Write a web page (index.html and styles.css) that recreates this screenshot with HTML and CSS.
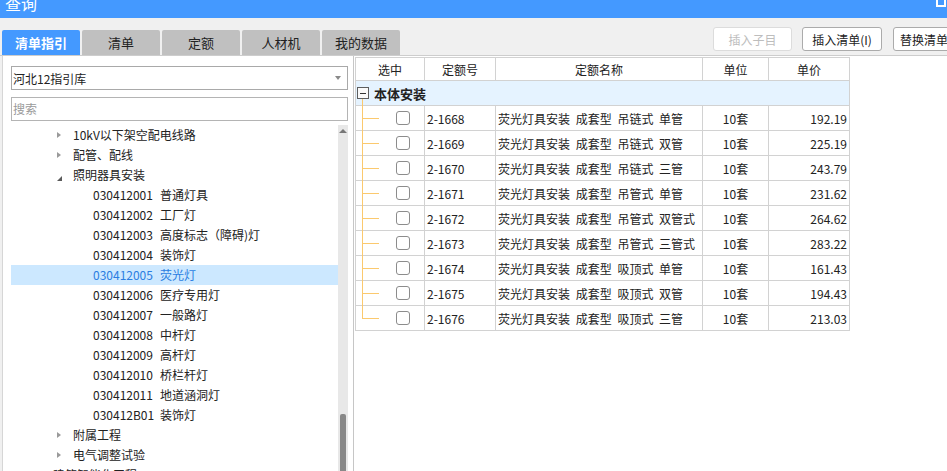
FILE: index.html
```html
<!DOCTYPE html>
<html lang="zh-CN">
<head>
<meta charset="utf-8">
<title>查询</title>
<link rel="stylesheet" href="styles.css">
</head>
<body>
<div class="titlebar">
  <span class="title">查询</span>
  <span class="maxicon"></span>
</div>
<div class="toolbar">
  <div class="tabs">
    <div class="tab active">清单指引</div>
    <div class="tab">清单</div>
    <div class="tab">定额</div>
    <div class="tab">人材机</div>
    <div class="tab">我的数据</div>
  </div>
  <div class="actions">
    <button class="btn btn-disabled">插入子目</button>
    <button class="btn btn-insert">插入清单(I)</button>
    <button class="btn btn-replace">替换清单</button>
  </div>
</div>
<div class="main">
  <div class="left">
    <div class="select"><span>河北12指引库</span><span class="caret"></span></div>
    <div class="search">搜索</div>
    <div class="tree">
      <div class="tree-list">
        <div class="row l1"><span class="arr"></span><span>10kV以下架空配电线路</span></div>
        <div class="row l1"><span class="arr"></span><span>配管、配线</span></div>
        <div class="row l1"><span class="arr open"></span><span>照明器具安装</span></div>
        <div class="row l2"><span class="code">030412001</span><span>普通灯具</span></div>
        <div class="row l2"><span class="code">030412002</span><span>工厂灯</span></div>
        <div class="row l2"><span class="code">030412003</span><span>高度标志（障碍)灯</span></div>
        <div class="row l2"><span class="code">030412004</span><span>装饰灯</span></div>
        <div class="row l2 sel"><span class="code">030412005</span><span>荧光灯</span></div>
        <div class="row l2"><span class="code">030412006</span><span>医疗专用灯</span></div>
        <div class="row l2"><span class="code">030412007</span><span>一般路灯</span></div>
        <div class="row l2"><span class="code">030412008</span><span>中杆灯</span></div>
        <div class="row l2"><span class="code">030412009</span><span>高杆灯</span></div>
        <div class="row l2"><span class="code">030412010</span><span>桥栏杆灯</span></div>
        <div class="row l2"><span class="code">030412011</span><span>地道涵洞灯</span></div>
        <div class="row l2"><span class="code">030412B01</span><span>装饰灯</span></div>
        <div class="row l1"><span class="arr"></span><span>附属工程</span></div>
        <div class="row l1"><span class="arr"></span><span>电气调整试验</span></div>
        <div class="row l0"><span class="arr"></span><span>建筑智能化工程</span></div>
      </div>
      <div class="scrollbar"><span class="up"></span><span class="thumb"></span></div>
    </div>
  </div>
  <div class="right">
    <div class="grid">
      <div class="hd">选中</div>
      <div class="hd">定额号</div>
      <div class="hd">定额名称</div>
      <div class="hd">单位</div>
      <div class="hd">单价</div>

      <div class="group"><span class="minus"></span><span class="group-name">本体安装</span></div>

      <div class="c1"><span class="cb"></span></div>
      <div class="c2">2-1668</div>
      <div class="c3">荧光灯具安装 成套型 吊链式 单管</div>
      <div class="c4">10套</div>
      <div class="c5">192.19</div>

      <div class="c1"><span class="cb"></span></div>
      <div class="c2">2-1669</div>
      <div class="c3">荧光灯具安装 成套型 吊链式 双管</div>
      <div class="c4">10套</div>
      <div class="c5">225.19</div>

      <div class="c1"><span class="cb"></span></div>
      <div class="c2">2-1670</div>
      <div class="c3">荧光灯具安装 成套型 吊链式 三管</div>
      <div class="c4">10套</div>
      <div class="c5">243.79</div>

      <div class="c1"><span class="cb"></span></div>
      <div class="c2">2-1671</div>
      <div class="c3">荧光灯具安装 成套型 吊管式 单管</div>
      <div class="c4">10套</div>
      <div class="c5">231.62</div>

      <div class="c1"><span class="cb"></span></div>
      <div class="c2">2-1672</div>
      <div class="c3">荧光灯具安装 成套型 吊管式 双管式</div>
      <div class="c4">10套</div>
      <div class="c5">264.62</div>

      <div class="c1"><span class="cb"></span></div>
      <div class="c2">2-1673</div>
      <div class="c3">荧光灯具安装 成套型 吊管式 三管式</div>
      <div class="c4">10套</div>
      <div class="c5">283.22</div>

      <div class="c1"><span class="cb"></span></div>
      <div class="c2">2-1674</div>
      <div class="c3">荧光灯具安装 成套型 吸顶式 单管</div>
      <div class="c4">10套</div>
      <div class="c5">161.43</div>

      <div class="c1"><span class="cb"></span></div>
      <div class="c2">2-1675</div>
      <div class="c3">荧光灯具安装 成套型 吸顶式 双管</div>
      <div class="c4">10套</div>
      <div class="c5">194.43</div>

      <div class="c1 last"><span class="cb"></span></div>
      <div class="c2">2-1676</div>
      <div class="c3">荧光灯具安装 成套型 吸顶式 三管</div>
      <div class="c4">10套</div>
      <div class="c5">213.03</div>
    </div>
  </div>
</div>
</body>
</html>
```

FILE: styles.css
```css
* { box-sizing: border-box; }
html, body { margin: 0; padding: 0; overflow: hidden; }
body {
  width: 947px;
  height: 471px;
  background: #f0f0f0;
  font-family: "Noto Sans CJK SC", "Noto Sans", sans-serif;
  font-size: 12px;
  color: #222;
}

/* title bar */
.titlebar {
  height: 18px;
  background: #4499ff;
  display: flex;
  justify-content: space-between;
  align-items: flex-start;
  overflow: hidden;
}
.title {
  color: #fff;
  font-size: 16px;
  line-height: 16px;
  margin: -5px 0 0 5px;
}
.maxicon {
  width: 10px;
  height: 7px;
  border: 2px solid #fff;
  border-top: none;
  margin-right: 1px;
}

/* toolbar with tabs and buttons */
.toolbar {
  height: 37px;
  display: flex;
  overflow: hidden;
}
.tabs {
  display: flex;
  gap: 2px;
  padding-left: 2px;
  align-items: flex-end;
  flex-shrink: 0;
}
.tab {
  width: 78px;
  height: 25px;
  background: #c0c0c0;
  border-radius: 2px 2px 0 0;
  text-align: center;
  line-height: 25px;
  font-size: 13px;
  color: #222;
}
.tab.active {
  background: #4499ff;
  color: #fff;
  font-weight: bold;
}
.actions {
  display: flex;
  flex-shrink: 0;
  margin-left: 313px;
  padding-top: 9px;
  align-items: flex-start;
}
.btn {
  height: 24px;
  width: 80px;
  padding: 0;
  background: #fff;
  border: 1px solid #ababab;
  border-radius: 3px;
  font: inherit;
  color: #222;
  flex-shrink: 0;
}
.btn-disabled {
  width: 79px;
  border-color: #dcdcdc;
  color: #bdbdbd;
}
.btn-insert { margin-left: 10px; }
.btn-replace {
  margin-left: 11px;
  width: 62px;
}

/* main area */
.main {
  height: 416px;
  border-top: 1px solid #cdcdcd;
  display: flex;
  padding-left: 2px;
}
.left {
  width: 352px;
  flex-shrink: 0;
  background: #fff;
  border-left: 1px solid #d6d6d6;
  border-right: 1px solid #c6c6c6;
  padding: 10px 5px 0 8px;
  display: flex;
  flex-direction: column;
}
.select {
  height: 24px;
  border: 1px solid #a9a9a9;
  display: flex;
  align-items: center;
  justify-content: space-between;
  padding: 0 6px 0 1px;
  flex-shrink: 0;
}
.caret {
  width: 0;
  height: 0;
  border-top: 4px solid #8a8a8a;
  border-left: 3px solid transparent;
  border-right: 3px solid transparent;
}
.search {
  height: 24px;
  margin-top: 7px;
  border: 1px solid #b4b4b4;
  color: #9a9a9a;
  padding-left: 1px;
  line-height: 22px;
  flex-shrink: 0;
}
.tree {
  flex: 1;
  margin-top: 4px;
  display: flex;
  overflow: hidden;
  min-height: 0;
}
.tree-list { flex: 1; overflow: hidden; }
.row {
  height: 20px;
  line-height: 20px;
  display: flex;
  align-items: center;
  white-space: nowrap;
}
.row.l0 { padding-left: 26px; }
.row.l1 { padding-left: 46px; }
.row.l2 { padding-left: 82px; }
.row.sel { background: #cce8ff; color: #2a7de1; }
.arr {
  width: 0;
  height: 0;
  border-left: 4px solid #9a9a9a;
  border-top: 3px solid transparent;
  border-bottom: 3px solid transparent;
  margin-right: 12px;
}
.arr.open {
  border-left: 0;
  border-right: 5px solid #5a5a5a;
  border-top: 5px solid transparent;
  border-bottom: 0;
  margin-right: 11px;
  margin-top: 6px;
}
.code { width: 67px; }
.scrollbar {
  width: 10px;
  background: #e8e8e8;
  display: flex;
  flex-direction: column;
  align-items: center;
  flex-shrink: 0;
}
.up {
  margin-top: 4px;
  width: 0;
  height: 0;
  border-bottom: 4px solid #777;
  border-left: 4px solid transparent;
  border-right: 4px solid transparent;
}
.thumb {
  margin-top: auto;
  width: 6px;
  height: 57px;
  background: #888;
  border-radius: 2px 2px 0 0;
}

/* right table */
.right {
  flex: 1;
  background: #fff;
  padding: 1px 0 0 1px;
}
.grid {
  display: grid;
  grid-template-columns: 69px 71px 207px 66px 81px;
  width: max-content;
  border-left: 1px solid #d2d2d2;
  border-top: 1px solid #d2d2d2;
}
.grid > div {
  height: 25px;
  border-right: 1px solid #d2d2d2;
  border-bottom: 1px solid #d2d2d2;
  display: flex;
  align-items: center;
  white-space: pre;
}
.grid > .hd {
  height: 23px;
  justify-content: center;
  color: #222;
}
.grid > .group {
  grid-column: 1 / -1;
  background: #e5f3ff;
  position: relative;
}
.group::after {
  content: "";
  position: absolute;
  left: 6px;
  top: 18px;
  bottom: -1px;
  width: 1px;
  background: #fbc96e;
}
.minus {
  width: 12px;
  height: 12px;
  border: 1px solid #5e5e5e;
  background: #fafafa;
  margin: 0 5px 0 1px;
  display: flex;
  align-items: center;
  justify-content: center;
}
.minus::before {
  content: "";
  width: 6px;
  height: 1px;
  background: #333;
}
.group-name { font-weight: bold; font-size: 13px; }
.grid > .c1 {
  position: relative;
  padding-left: 40px;
}
.c1::before {
  content: "";
  position: absolute;
  left: 6px;
  top: -1px;
  bottom: -1px;
  width: 1px;
  background: #fbc96e;
}
.c1.last::before { bottom: 11px; }
.c1::after {
  content: "";
  position: absolute;
  left: 6px;
  top: 12px;
  width: 17px;
  height: 1px;
  background: #fbc96e;
}
.cb {
  width: 14px;
  height: 14px;
  border: 1px solid #8c8c8c;
  border-radius: 3px;
  background: #fff;
}
.grid > .c2 { padding-left: 2px; }
.grid > .c3 { padding-left: 2px; word-spacing: 3px; }
.grid > .c4 { justify-content: center; }
.grid > .c5 { justify-content: flex-end; padding-right: 2px; }
```
